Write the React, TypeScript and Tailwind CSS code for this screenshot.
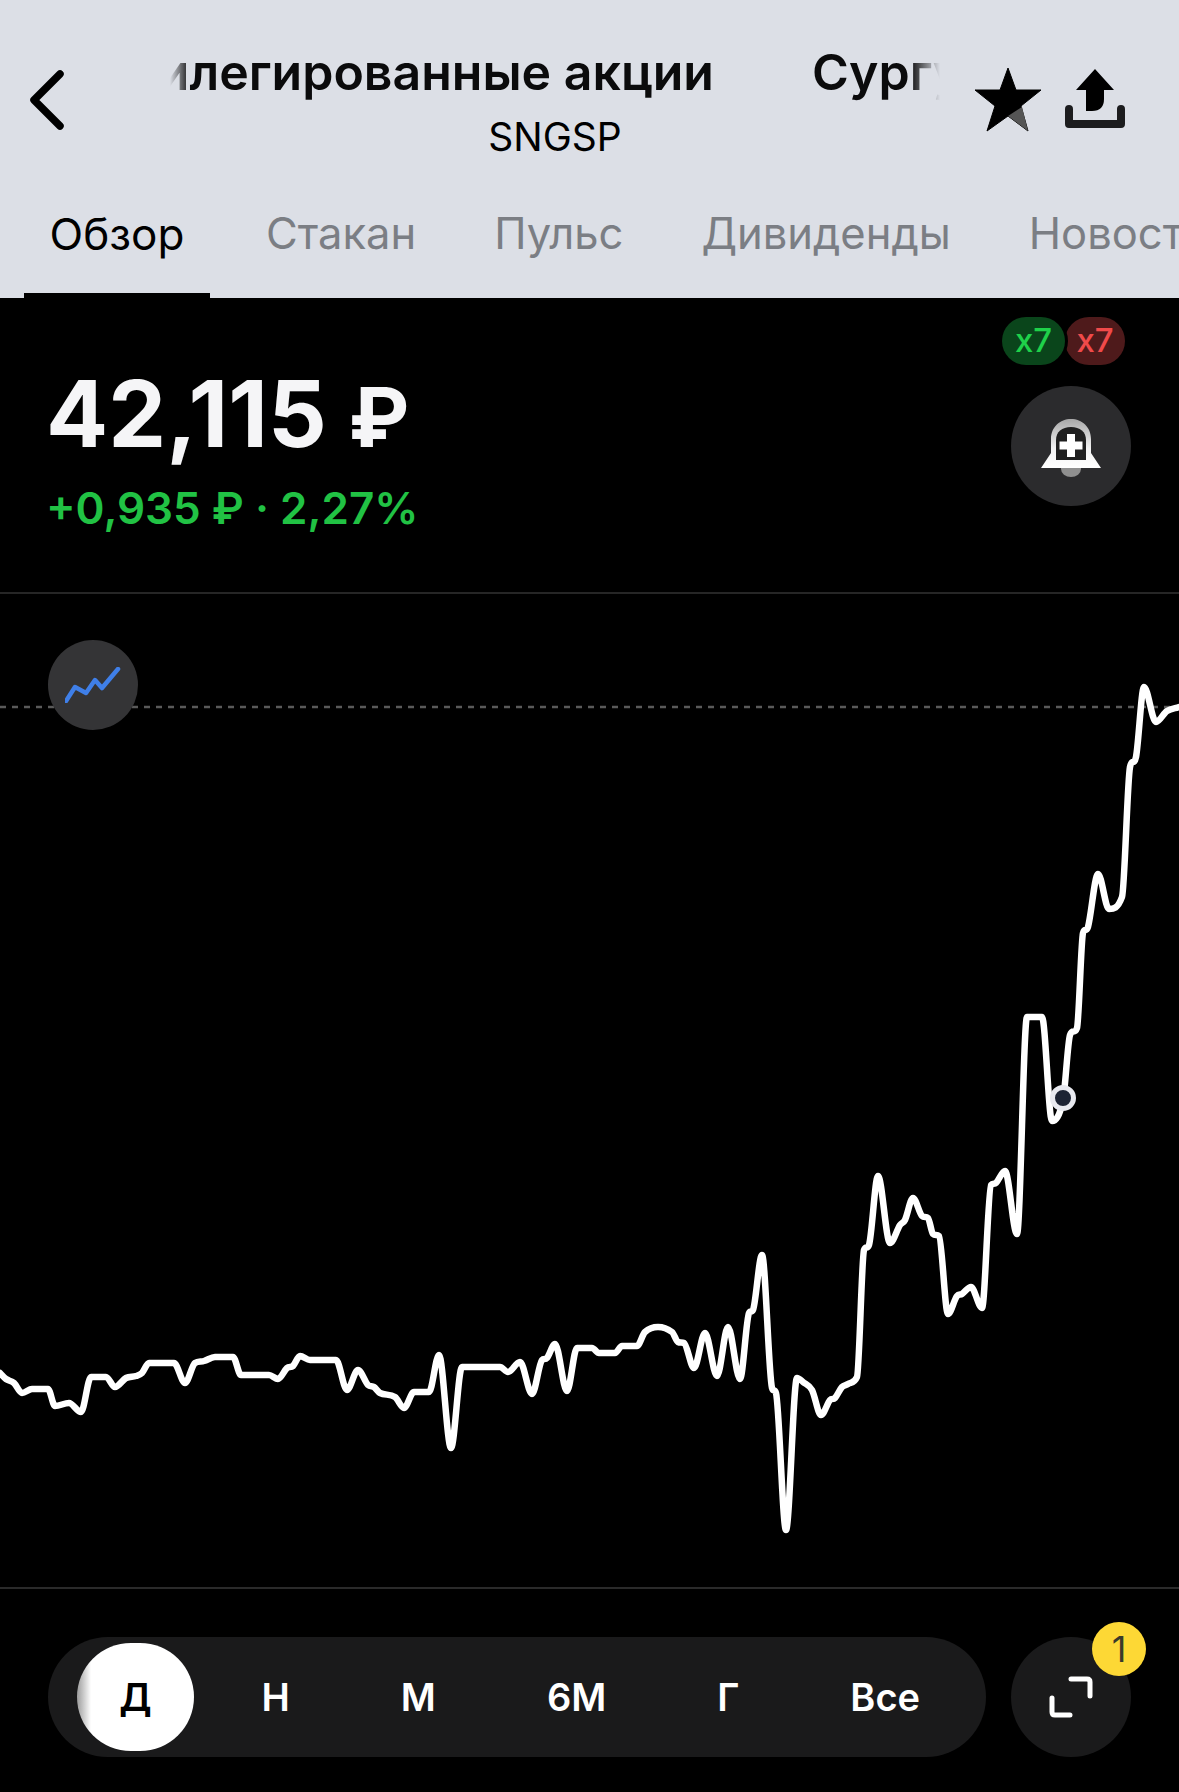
// чарт в координатах экрана, верх области графика = 594
const points: [number, number][] = [
  [0, 1373], [6, 1379], [14, 1383], [22, 1393], [32, 1389], [48, 1389], [55, 1406], [69, 1403], [81, 1412],
  [91, 1377], [106, 1377], [115, 1387], [126, 1378], [136, 1376], [142, 1373], [149, 1363], [174, 1363],
  [185, 1383], [195, 1363], [204, 1361], [215, 1357], [233, 1357], [241, 1375], [269, 1375], [278, 1379],
  [287, 1368], [293, 1366], [300, 1356], [310, 1360], [336, 1360], [347, 1390], [358, 1370], [368, 1385],
  [374, 1387], [380, 1393], [395, 1397], [404, 1408], [414, 1392], [429, 1392], [439, 1355], [451, 1448],
  [462, 1367], [500, 1367], [508, 1372], [520, 1362], [532, 1394], [542, 1360], [547, 1358], [555, 1344],
  [567, 1391], [577, 1348], [592, 1348], [599, 1353], [615, 1353], [622, 1346], [637, 1346], [645, 1332],
  [658, 1327], [672, 1332], [678, 1342], [684, 1343], [694, 1368], [705, 1333], [717, 1376], [728, 1327],
  [740, 1379], [749, 1313], [753, 1310], [762, 1255], [772, 1388], [776, 1393], [786, 1530], [797, 1378],
  [803, 1382], [812, 1390], [821, 1415], [830, 1400], [835, 1398], [842, 1387], [848, 1384], [857, 1377],
  [864, 1250], [869, 1245], [878, 1176], [890, 1243], [900, 1225], [905, 1220], [913, 1198], [922, 1216],
  [928, 1218], [933, 1234], [939, 1236], [948, 1314], [957, 1296], [962, 1294], [971, 1287], [982, 1308],
  [991, 1185], [996, 1183], [1005, 1171], [1017, 1234], [1027, 1017], [1042, 1017], [1052, 1121], [1063, 1100],
  [1070, 1035], [1077, 1028], [1083, 933], [1088, 927], [1098, 874], [1109, 909], [1122, 897], [1130, 767],
  [1136, 757], [1144, 687], [1156, 722], [1167, 711], [1179, 707],
]

// кривая без выбросов: центральная разность, ограниченная соседними наклонами
function linePath(pts: [number, number][], top: number) {
  const n = pts.length
  const slopes: number[] = []
  for (let i = 0; i < n - 1; i++) slopes.push((pts[i + 1][1] - pts[i][1]) / (pts[i + 1][0] - pts[i][0]))
  const tangents = pts.map((_, i) => {
    if (i === 0) return slopes[0]
    if (i === n - 1) return slopes[n - 2]
    if (slopes[i - 1] * slopes[i] <= 0) return 0
    const central = (pts[i + 1][1] - pts[i - 1][1]) / (pts[i + 1][0] - pts[i - 1][0])
    const limit = 3 * Math.min(Math.abs(slopes[i - 1]), Math.abs(slopes[i]))
    return Math.sign(central) * Math.min(Math.abs(central), limit)
  })
  let d = `M${pts[0][0]} ${pts[0][1] - top}`
  for (let i = 0; i < n - 1; i++) {
    const h = (pts[i + 1][0] - pts[i][0]) / 3
    d += `C${pts[i][0] + h} ${pts[i][1] - top + tangents[i] * h} ${pts[i + 1][0] - h} ${pts[i + 1][1] - top - tangents[i + 1] * h} ${pts[i + 1][0]} ${pts[i + 1][1] - top}`
  }
  return d
}

const tabs = ['Стакан', 'Пульс', 'Дивиденды', 'Новости']
const periods = ['Н', 'М', '6М', 'Г', 'Все']

function BackIcon() {
  return (
    <svg width="40" height="70" viewBox="0 0 40 70">
      <path d="M33 9 7 35 33 61" fill="none" stroke="#000" strokeWidth="7.500" strokeLinecap="round" strokeLinejoin="round" />
    </svg>
  )
}

function StarIcon() {
  return (
    <svg width="68" height="66" viewBox="0 0 68 66">
      <path d="M34 1 42 23 67 23 47 39 54 64 34 49 13 64 21 39 1 23 26 23Z" fill="#000" stroke="#000" strokeWidth="1" strokeLinejoin="round" />
      <path d="M48 40 54 64 34 49Z" fill="#555" />
    </svg>
  )
}

function ShareIcon() {
  return (
    <svg width="60" height="60" viewBox="0 0 60 60">
      <path d="M30 0 49 21H39V30Q39 42 27 42H21V21H11Z" fill="#000" />
      <path d="M4 40V55H56V40" fill="none" stroke="#1c1c1e" strokeWidth="8" strokeLinecap="round" strokeLinejoin="round" />
    </svg>
  )
}

function BellIcon() {
  return (
    <svg width="62" height="60" viewBox="0 0 62 60">
      <defs>
        <linearGradient id="bell" x1="0" y1="0" x2="0" y2="1">
          <stop offset="0" stopColor="#a8a8a8" />
          <stop offset="0.6" stopColor="#f2f2f2" />
          <stop offset="1" stopColor="#fff" />
        </linearGradient>
      </defs>
      <path d="M21 50H41V51A10 8 0 0 1 21 51Z" fill="#8f8f8f" />
      <path d="M1 50 11 35V21C11 9 20 1 31 1S51 9 51 21V35L61 50Z" fill="url(#bell)" />
      <path d="M16 42V22C16 14 22 9 31 9S46 14 46 22V42Z" fill="#1f1f1f" />
      <path d="M31 16V39M19.500 27.500H42.500" stroke="#fff" strokeWidth="8" />
    </svg>
  )
}

function ChartIcon() {
  return (
    <svg width="56" height="36" viewBox="0 0 56 36">
      <path d="M1 34 10 20 21 26 30 13 37 21 53 2" fill="none" stroke="#3f7fe8" strokeWidth="4.500" strokeLinejoin="round" strokeLinecap="round" />
    </svg>
  )
}

function ExpandIcon() {
  return (
    <svg width="44" height="42" viewBox="0 0 44 42">
      <path d="M22 3H38Q41 3 41 6V20M3 22V36Q3 39 6 39H21" fill="none" stroke="#fff" strokeWidth="5" strokeLinecap="round" />
    </svg>
  )
}

export default function App() {
  return (
    <div className="flex h-[1792px] w-[1179px] flex-col overflow-hidden bg-black font-['Inter',sans-serif]">
      <header className="h-[298px] bg-[#dcdfe6]">
        <div className="flex h-[178px] items-start">
          <div className="mt-[65px] ml-[27px] w-[143px]">
            <BackIcon />
          </div>
          <div className="mt-[40px] w-[770px]">
            <div className="flex overflow-hidden text-[50px] leading-[64px] font-semibold whitespace-nowrap text-[#0b0b0c] [mask-image:linear-gradient(90deg,transparent,#000_20px,#000_740px,transparent)]">
              <div className="flex w-[544px] shrink-0 justify-end">
                <span className="shrink-0">Привилегированные акции</span>
              </div>
              <span className="ml-[98px] shrink-0">Сургутнефтегаз</span>
            </div>
            <div className="mt-[8px] text-center text-[39px] leading-[50px] text-black">SNGSP</div>
          </div>
          <div className="mt-[67px] ml-[34px]">
            <StarIcon />
          </div>
          <div className="mt-[69px] ml-[23px]">
            <ShareIcon />
          </div>
        </div>
        <nav className="flex h-[120px] overflow-hidden whitespace-nowrap">
          <div className="ml-[24px] flex h-full w-[186px] shrink-0 items-center justify-center border-b-[5px] border-black pb-[4px] text-[44px] text-black">
            Обзор
          </div>
          <div className="ml-[56px] flex h-full shrink-0 gap-[78px]">
            {tabs.map((tab) => (
              <div key={tab} className="flex h-full items-center pb-[9px] text-[43.500px] text-[#7b7e84]">
                {tab}
              </div>
            ))}
          </div>
        </nav>
      </header>

      <section className="relative flex h-[296px] justify-between border-b-2 border-[#262626] pl-[46px]">
        <div>
          <div className="mt-[61px] text-[92px] leading-[110px] font-bold text-[#f5f5f7]">
            42,115 <span className="text-[82px]">₽</span>
          </div>
          <div className="mt-[7px] text-[44px] leading-[56px] font-semibold text-[#21c244]">+0,935 ₽ · 2,27%</div>
        </div>
        <div className="mt-[19px] mr-[48px] flex flex-col items-end">
          <div className="mr-[6px] flex">
            <div className="relative z-10 flex h-[48px] w-[63px] items-center justify-center rounded-full bg-[#0a451b] text-[33px] font-medium text-[#1fd14a] ring-[3px] ring-black">
              x7
            </div>
            <div className="flex h-[48px] w-[60px] items-center justify-center rounded-full bg-[#4e1a1b] text-[33px] font-medium text-[#f04a4a]">x7</div>
          </div>
          <button className="mt-[21px] flex h-[120px] w-[120px] items-center justify-center rounded-full bg-[#2b2b2d] pt-[3px]">
            <BellIcon />
          </button>
        </div>
      </section>

      <main className="relative h-[993px]">
        <svg className="block h-full w-full" viewBox="0 0 1179 993" fill="none">
          <path d="M0 113H1179" stroke="#5a5a5a" strokeWidth="2.500" strokeDasharray="6 6" />
          <path d={linePath(points, 594)} stroke="#fff" strokeWidth="6.500" strokeLinejoin="round" strokeLinecap="round" />
          <circle cx="1063" cy="504" r="10.500" fill="#1c2333" stroke="#e8e9ef" strokeWidth="5" />
        </svg>
        <button className="absolute top-[46px] left-[48px] flex h-[90px] w-[90px] items-center justify-center rounded-full bg-[#343436]">
          <ChartIcon />
        </button>
      </main>

      <footer className="flex flex-1 gap-[25px] border-t-2 border-[#2a2a2a] pt-[48px] pl-[48px]">
        <div className="flex h-[120px] w-[938px] items-center rounded-full bg-[#1a1a1b] pl-[29px] text-[38px] font-semibold text-white">
          <button className="mr-[12px] h-[108px] w-[117px] shrink-0 rounded-full bg-[linear-gradient(90deg,#9c9c9c,#fff_12%)] text-black">Д</button>
          {periods.map((period) => (
            <button key={period} className="shrink-0 px-[55.500px]">
              {period}
            </button>
          ))}
        </div>
        <div className="relative flex h-[120px] w-[120px] items-center justify-center rounded-full bg-[#1a1a1b]">
          <ExpandIcon />
          <span className="absolute -top-[15px] -right-[15px] flex h-[54px] w-[54px] items-center justify-center rounded-full bg-[#fdd835] text-[36px] text-[#3a3a2a]">
            1
          </span>
        </div>
      </footer>
    </div>
  )
}
